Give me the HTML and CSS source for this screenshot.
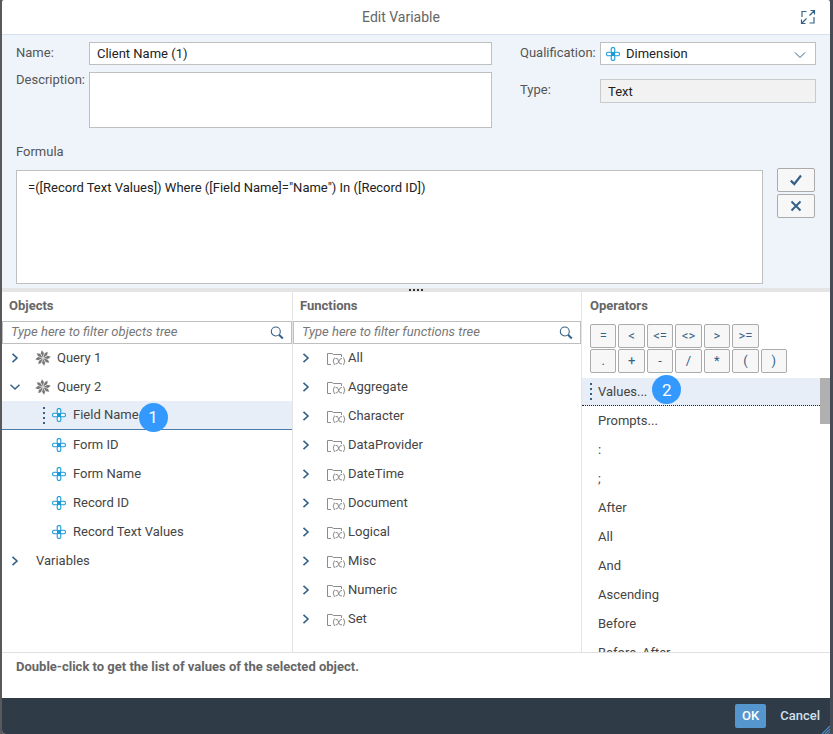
FILE: index.html
```html
<!DOCTYPE html>
<html lang="en">
<head>
<meta charset="utf-8">
<meta name="viewport" content="width=device-width, initial-scale=1.0">
<title>Edit Variable</title>
<link rel="stylesheet" href="styles.css">
</head>
<body>
<!-- shared icons -->
<svg class="sprite" width="0" height="0">
  <symbol id="dim" viewBox="0 0 14 14">
    <g fill="#fff" stroke="#1a9bd8" stroke-width="1.1">
      <rect x="5.2" y="0.6" width="3.6" height="5" rx="1.4"/>
      <rect x="5.2" y="8.4" width="3.6" height="5" rx="1.4"/>
      <rect x="0.6" y="5.2" width="5" height="3.6" rx="1.4"/>
      <rect x="8.4" y="5.2" width="5" height="3.6" rx="1.4"/>
    </g>
    <rect x="5" y="5" width="4" height="4" fill="#1a9bd8"/>
  </symbol>
  <symbol id="query" viewBox="0 0 14 14">
    <g fill="#777">
      <path id="ray" d="M7 6.600L5.100 2.800L6 0.200L7.800 2.600z"/>
      <use href="#ray" transform="rotate(45 7 7)"/>
      <use href="#ray" transform="rotate(90 7 7)"/>
      <use href="#ray" transform="rotate(135 7 7)"/>
      <use href="#ray" transform="rotate(180 7 7)"/>
      <use href="#ray" transform="rotate(225 7 7)"/>
      <use href="#ray" transform="rotate(270 7 7)"/>
      <use href="#ray" transform="rotate(315 7 7)"/>
    </g>
  </symbol>
  <symbol id="folder" viewBox="0 0 20 14">
    <g fill="none" stroke="#8c8c8c" stroke-width="1">
      <path d="M5 12.500H1.500V1.500H6L7.500 2.500H15.500V5"/>
      <path d="M8.500 5.500Q6 9 8.500 13M17.500 5.500Q20 9 17.500 13"/>
      <path d="M9.500 6.500Q12 5.500 12.500 9T16 12M16 6.500Q14 6 13 9T9.500 12"/>
    </g>
  </symbol>
  <symbol id="right" viewBox="0 0 10 10">
    <path d="M2.500 0.800L7 5L2.500 9.200" fill="none" stroke="#346187" stroke-width="1.600"/>
  </symbol>
  <symbol id="down" viewBox="0 0 10 10">
    <path d="M0.500 2.800L5 7L9.500 2.800" fill="none" stroke="#346187" stroke-width="1.500"/>
  </symbol>
  <symbol id="search" viewBox="0 0 14 14">
    <circle cx="5.800" cy="5.500" r="4.500" fill="none" stroke="#346187" stroke-width="1.100"/>
    <path d="M9 8.800L12.800 12.400" stroke="#346187" stroke-width="2"/>
  </symbol>
</svg>

<div class="dialog">
  <header class="title-bar">
    <h1>Edit Variable</h1>
    <button class="expand" aria-label="Maximize">
      <svg width="16" height="16" viewBox="0 0 16 16" fill="none" stroke="#346187" stroke-width="1.200">
        <path d="M6.500 2.500H2V8M9.500 14H14V8M9.500 6.500L14.500 1.500M10.500 1.500H14.500V5.500M6.500 9.500L1.500 14.500M1.500 10.500V14.500H5.500"/>
      </svg>
    </button>
  </header>

  <section class="definition">
    <div class="fields">
      <div class="fields-left">
        <label for="name">Name:</label>
        <input id="name" class="box" type="text" value="Client Name (1)">
        <label class="desc-label" for="desc">Description:</label>
        <textarea id="desc" class="box desc"></textarea>
      </div>
      <div class="fields-right">
        <label for="qual">Qualification:</label>
        <div class="select-wrap">
          <select id="qual" class="box"><option>Dimension</option></select>
          <svg class="select-icon" width="14" height="14"><use href="#dim"/></svg>
          <svg class="select-arrow" width="12" height="8" viewBox="0 0 12 8"><path d="M1 1.500L6 6.500L11 1.500" fill="none" stroke="#346187"/></svg>
        </div>
        <label for="type">Type:</label>
        <input id="type" class="box readonly" type="text" value="Text" readonly>
      </div>
    </div>
    <label class="formula-label" for="formula">Formula</label>
    <div class="formula-row">
      <textarea id="formula" class="box formula" spellcheck="false">=([Record Text Values]) Where ([Field Name]="Name") In ([Record ID])</textarea>
      <div class="formula-actions">
        <button class="btn" aria-label="Validate">
          <svg width="12" height="12" viewBox="0 0 12 12"><path d="M0.800 6.600L4.300 10L11 1.500" fill="none" stroke="#346187" stroke-width="2.200"/></svg>
        </button>
        <button class="btn" aria-label="Clear">
          <svg width="12" height="12" viewBox="0 0 12 12"><path d="M1.500 1.500L10.500 10.500M10.500 1.500L1.500 10.500" fill="none" stroke="#346187" stroke-width="2"/></svg>
        </button>
      </div>
    </div>
  </section>

  <div class="splitter"><i></i><i></i><i></i><i></i></div>

  <section class="panels">
    <div class="panel objects">
      <h2>Objects</h2>
      <div class="filter">
        <input class="box" type="text" placeholder="Type here to filter objects tree" aria-label="Filter objects">
        <svg width="14" height="14"><use href="#search"/></svg>
      </div>
      <ul class="tree">
        <li><svg class="arrow" width="10" height="10"><use href="#right"/></svg><svg class="query" width="16" height="16"><use href="#query"/></svg>Query 1</li>
        <li><svg class="arrow" width="10" height="10"><use href="#down"/></svg><svg class="query" width="16" height="16"><use href="#query"/></svg>Query 2</li>
        <li class="child selected"><span class="grip"></span><svg width="14" height="14"><use href="#dim"/></svg>Field Name<b class="step">1</b></li>
        <li class="child"><svg width="14" height="14"><use href="#dim"/></svg>Form ID</li>
        <li class="child"><svg width="14" height="14"><use href="#dim"/></svg>Form Name</li>
        <li class="child"><svg width="14" height="14"><use href="#dim"/></svg>Record ID</li>
        <li class="child"><svg width="14" height="14"><use href="#dim"/></svg>Record Text Values</li>
        <li><svg class="arrow" width="10" height="10"><use href="#right"/></svg>Variables</li>
      </ul>
    </div>

    <div class="panel functions">
      <h2>Functions</h2>
      <div class="filter">
        <input class="box" type="text" placeholder="Type here to filter functions tree" aria-label="Filter functions">
        <svg width="14" height="14"><use href="#search"/></svg>
      </div>
      <ul class="tree">
        <li><svg class="arrow" width="10" height="10"><use href="#right"/></svg><svg class="folder" width="20" height="14"><use href="#folder"/></svg>All</li>
        <li><svg class="arrow" width="10" height="10"><use href="#right"/></svg><svg class="folder" width="20" height="14"><use href="#folder"/></svg>Aggregate</li>
        <li><svg class="arrow" width="10" height="10"><use href="#right"/></svg><svg class="folder" width="20" height="14"><use href="#folder"/></svg>Character</li>
        <li><svg class="arrow" width="10" height="10"><use href="#right"/></svg><svg class="folder" width="20" height="14"><use href="#folder"/></svg>DataProvider</li>
        <li><svg class="arrow" width="10" height="10"><use href="#right"/></svg><svg class="folder" width="20" height="14"><use href="#folder"/></svg>DateTime</li>
        <li><svg class="arrow" width="10" height="10"><use href="#right"/></svg><svg class="folder" width="20" height="14"><use href="#folder"/></svg>Document</li>
        <li><svg class="arrow" width="10" height="10"><use href="#right"/></svg><svg class="folder" width="20" height="14"><use href="#folder"/></svg>Logical</li>
        <li><svg class="arrow" width="10" height="10"><use href="#right"/></svg><svg class="folder" width="20" height="14"><use href="#folder"/></svg>Misc</li>
        <li><svg class="arrow" width="10" height="10"><use href="#right"/></svg><svg class="folder" width="20" height="14"><use href="#folder"/></svg>Numeric</li>
        <li><svg class="arrow" width="10" height="10"><use href="#right"/></svg><svg class="folder" width="20" height="14"><use href="#folder"/></svg>Set</li>
      </ul>
    </div>

    <div class="panel operators">
      <h2>Operators</h2>
      <div class="keys">
        <button class="btn">=</button>
        <button class="btn">&lt;</button>
        <button class="btn">&lt;=</button>
        <button class="btn">&lt;&gt;</button>
        <button class="btn">&gt;</button>
        <button class="btn">&gt;=</button>
        <button class="btn new-row">.</button>
        <button class="btn">+</button>
        <button class="btn">-</button>
        <button class="btn">/</button>
        <button class="btn">*</button>
        <button class="btn">(</button>
        <button class="btn">)</button>
      </div>
      <div class="op-scroll">
        <ul class="op-list">
          <li class="selected"><span class="grip"></span>Values...<b class="step">2</b></li>
          <li>Prompts...</li>
          <li>:</li>
          <li>;</li>
          <li>After</li>
          <li>All</li>
          <li>And</li>
          <li>Ascending</li>
          <li>Before</li>
          <li>Before_After</li>
        </ul>
        <div class="scrollbar"><div class="thumb"></div></div>
      </div>
    </div>
  </section>

  <p class="hint">Double-click to get the list of values of the selected object.</p>

  <footer class="actions">
    <button class="ok">OK</button>
    <button class="cancel">Cancel</button>
    <svg class="resize" width="8" height="8" viewBox="0 0 8 8"><path d="M0 8L8 0M3 8L8 3M6 8L8 6" stroke="#4f90cc" stroke-width="1.200"/></svg>
  </footer>
</div>
</body>
</html>
```
FILE: styles.css
```css
* { box-sizing: border-box; }
body {
  margin: 0;
  padding: 0 3px 0 2px;
  height: 100vh;
  overflow: hidden;
  background: linear-gradient(90deg, #59595b 50%, #464b55 50%);
  font-family: Roboto, "Liberation Sans", sans-serif;
  font-size: 13px;
  line-height: 16px;
  color: #444;
}
.sprite { position: absolute; }
svg { flex: none; }
button, input, select, textarea { font: inherit; margin: 0; }
ul { list-style: none; margin: 0; padding: 0; }

.dialog {
  display: flex;
  flex-direction: column;
  height: 100%;
  background: #fff;
  border-radius: 2px 2px 4px 4px;
  overflow: hidden;
}

.title-bar {
  display: grid;
  grid-template-columns: 1fr auto 1fr;
  align-items: center;
  height: 35px;
  padding: 0 14px;
  border-bottom: 1px solid #d5e0ee;
}
.title-bar h1 { grid-column: 2; margin: 0; font-size: 14px; font-weight: normal; color: #666; margin-right: 30px; }
.expand { justify-self: end; padding: 0; border: 0; background: none; height: 16px; }

.definition { padding: 7px 14px 4px; background: #eef4f9; }
.fields { display: flex; gap: 28px; }
.fields-left, .fields-right { display: grid; align-items: start; align-content: start; }
.fields-left { flex: 1; grid-template-columns: 73px 1fr; row-gap: 7px; }
.fields-right { width: 296px; grid-template-columns: 80px 1fr; row-gap: 14px; }
.fields label { padding-top: 3px; color: #555; white-space: nowrap; }
.fields .desc-label { padding-top: 0; }
.box {
  display: block;
  width: 100%;
  height: 23px;
  padding: 0 7px;
  border: 1px solid #bfbfbf;
  border-radius: 0;
  background: #fff;
  color: #222;
  outline: 0;
  resize: none;
}
.desc { height: 56px; }
.readonly { height: 24px; background: #f2f2f2; border-color: #c8cacc; }
.select-wrap { position: relative; }
.select-wrap .box { appearance: none; padding-left: 25px; }
.select-icon { position: absolute; left: 6px; top: 5px; }
.select-arrow { position: absolute; right: 10px; top: 9px; }
.formula-label { display: block; margin: 16px 0 10px; color: #555; }
.formula-row { display: flex; gap: 14px; padding-right: 1px; }
.formula { flex: 1; height: 114px; padding: 9px 11px; }
.formula-actions { display: flex; flex-direction: column; gap: 2px; margin-top: -2px; }
.btn {
  display: flex;
  align-items: center;
  justify-content: center;
  height: 24px;
  padding: 0;
  border: 1px solid #ababab;
  border-radius: 2px;
  background: #f7f7f7;
  color: #346187;
}
.formula-actions .btn { width: 38px; }

.splitter { display: flex; align-items: center; justify-content: center; gap: 2px; height: 4px; background: #e5e5e5; }
.splitter i { width: 2px; height: 2px; background: #333; }

.panels { display: grid; grid-template-columns: 291fr 289fr 248fr; flex: 1; min-height: 0; border-bottom: 1px solid #e0e0e0; }
.panel { display: flex; flex-direction: column; min-width: 0; min-height: 0; border-right: 1px solid #e5e5e5; }
.operators { border-right: 0; }
.panel h2 { margin: 0; padding: 6px 7px 7px; font-size: 13px; line-height: 16px; font-weight: bold; color: #666; }
.operators h2 { padding-left: 8px; }
.filter { position: relative; }
.filter .box { padding: 0 8px 2px; }
.filter input::placeholder { font-style: italic; color: #777; opacity: 1; }
.filter svg { position: absolute; right: 8px; top: 5px; }

.tree { margin-top: -1px; }
.tree li { display: flex; align-items: center; height: 29px; position: relative; }
.tree .arrow { margin: 0 16px 0 8px; }
.objects .query { margin: 0 6px 0 -1px; }
.functions .folder { margin: 2px 2px 0 -1px; }
.tree .child { padding-left: 50px; gap: 7px; }
.tree .selected { background: #e7eef7; border-bottom: 1px solid #4a79ab; }
.grip { position: absolute; width: 2px; height: 17px; background: repeating-linear-gradient(#346187 0 2px, transparent 2px 5px); }
.tree .grip { left: 41px; }
.step {
  display: flex;
  align-items: center;
  justify-content: center;
  flex: none;
  width: 29px;
  height: 29px;
  border-radius: 50%;
  background: #3399ff;
  color: #fff;
  font-size: 17px;
  font-weight: normal;
  z-index: 1;
}
.tree .step { margin: 4px 0 0 -7px; }

.keys {
  display: grid;
  grid-template-columns: repeat(7, 1fr);
  gap: 1px 2px;
  max-width: 213px;
  padding: 3px 8px 5px;
}
.keys .new-row { grid-column-start: 1; }
/* clips only the bottom so the marker can rise above the first row */
.op-scroll { display: flex; flex: 1; min-height: 0; clip-path: inset(-10px 0 0 0); }
.op-list { flex: 1; }
.op-list li { display: flex; align-items: center; height: 29px; padding-left: 16px; position: relative; }
.op-list .selected { height: 28px; background: #e7eef7; border-bottom: 1px dotted #222; }
.op-list .grip { left: 8px; }
.op-list .step { margin: -4px 0 0 5px; }
.scrollbar { width: 10px; }
.thumb { height: 46px; background: #b0b0b0; }

.hint { margin: 0; padding: 6px 14px 23px; font-weight: bold; color: #666; }
.actions { position: relative; display: flex; align-items: center; justify-content: flex-end; gap: 14px; height: 36px; padding: 0 10px; background: #2f3c48; }
.actions button { border: 0; padding: 0; height: 24px; font-weight: 500; }
.ok { width: 31px; border-radius: 2px; background: #5496cd; color: #fff; }
.actions .ok { background: #5496cd; }
.cancel { background: none; color: #d1e0ee; }
.resize { position: absolute; right: 0; bottom: 0; }
```
